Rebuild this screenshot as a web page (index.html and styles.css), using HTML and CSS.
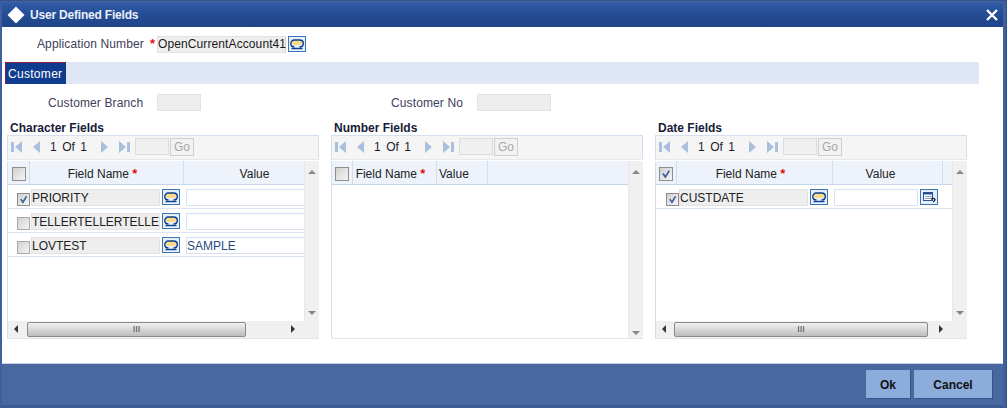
FILE: index.html
```html
<!DOCTYPE html>
<html lang="en">
<head>
<meta charset="utf-8">
<title>User Defined Fields</title>
<link rel="stylesheet" href="styles.css">
</head>
<body>
<svg class="defs" width="0" height="0" aria-hidden="true">
  <symbol id="lov" viewBox="0 0 18 16">
    <rect x=".5" y=".5" width="17" height="15" fill="#e6eff9" stroke="#3d75b4"/>
    <rect x="3" y="4" width="12" height="5" rx="2.500" fill="#f6dc8c"/>
    <path d="M6.500 11C4 11 2.800 9.800 2.800 7.600 2.800 5.300 4.400 4 6.500 4h5C13.800 4 15.300 5.300 15.300 7.500c0 2-1.300 3.500-3.800 3.500" fill="none" stroke="#0e3d8e" stroke-width="1.400"/>
    <path d="M3.500 12.500h11" stroke="#0e3d8e" stroke-width="1.400"/>
  </symbol>
  <symbol id="cal" viewBox="0 0 18 16">
    <rect x=".5" y=".5" width="17" height="15" fill="#e6eff9" stroke="#3d75b4"/>
    <rect x="3.500" y="3.500" width="9" height="8" fill="#fff" stroke="#27508f"/>
    <rect x="3" y="3" width="10" height="2.500" fill="#27508f"/>
    <path d="M5 7.500h7M5 9.500h7" stroke="#7d9cc6"/>
    <path d="M11.500 10.500c.5-1.500 3-1.500 3.500 0 .2 1-1 1.500-1.800 2.500" fill="none" stroke="#111" stroke-width="1.200"/>
  </symbol>
  <symbol id="first" viewBox="0 0 11 12"><path d="M0 1h3v10H0zM11 0v12L4 6z" fill="#a9c0dd"/></symbol>
  <symbol id="prev" viewBox="0 0 7 12"><path d="M7 0v12L0 6z" fill="#a9c0dd"/></symbol>
  <symbol id="next" viewBox="0 0 7 12"><path d="M0 0v12l7-6z" fill="#a9c0dd"/></symbol>
  <symbol id="last" viewBox="0 0 11 12"><path d="M8 1h3v10H8zM0 0v12l7-6z" fill="#a9c0dd"/></symbol>
  <symbol id="tick" viewBox="0 0 14 14"><path d="M3.500 6.500l2.800 4 4.500-7.500" fill="none" stroke="#3b5c9c" stroke-width="2"/></symbol>
</svg>

<div class="window">
  <header class="titlebar">
    <span class="diamond"></span>
    <h1 class="title">User Defined Fields</h1>
    <svg class="close" width="12" height="12" viewBox="0 0 12 12" aria-label="Close"><path d="M1 1l10 10M11 1L1 11" stroke="#fff" stroke-width="2.400"/></svg>
  </header>

  <main class="content">
    <div class="app-row">
      <label class="lbl lbl-app">Application Number</label>
      <span class="star">*</span>
      <span class="input ro app-input">OpenCurrentAccount41</span>
      <svg class="lov"><use href="#lov"/></svg>
    </div>

    <nav class="tabs"><span class="tab">Customer</span></nav>

    <div class="cust-row">
      <label class="lbl lbl-branch">Customer Branch</label>
      <span class="input ro cust-branch"></span>
      <label class="lbl lbl-no">Customer No</label>
      <span class="input ro cust-no"></span>
    </div>

    <div class="panels">
      <section class="panel">
        <h2 class="panel-title">Character Fields</h2>
        <div class="pager">
          <svg class="pg-first"><use href="#first"/></svg>
          <svg class="pg-prev"><use href="#prev"/></svg>
          <span class="pg-text">1&nbsp;&nbsp;Of&nbsp;&nbsp;1</span>
          <svg class="pg-next"><use href="#next"/></svg>
          <svg class="pg-last"><use href="#last"/></svg>
          <span class="pg-input"></span>
          <span class="pg-go">Go</span>
        </div>
        <div class="grid">
          <div class="grid-main">
            <div class="thead thead-char">
              <span class="th th-check"><span class="cb"></span></span>
              <span class="th th-name">Field Name&nbsp;<i class="star">*</i></span>
              <span class="th th-value">Value</span>
            </div>
            <div class="tr tr-char">
              <span class="cb"><svg><use href="#tick"/></svg></span>
              <span class="input ro field">PRIORITY</span>
              <svg class="lov"><use href="#lov"/></svg>
              <span class="input value value-wide"></span>
            </div>
            <div class="tr tr-char">
              <span class="cb cb-off"></span>
              <span class="input ro field">TELLERTELLERTELLE</span>
              <svg class="lov"><use href="#lov"/></svg>
              <span class="input value value-wide"></span>
            </div>
            <div class="tr tr-char">
              <span class="cb cb-off"></span>
              <span class="input ro field">LOVTEST</span>
              <svg class="lov"><use href="#lov"/></svg>
              <span class="input value value-wide sample">SAMPLE</span>
            </div>
          </div>
          <div class="vbar"><i class="arr-up"></i><i class="arr-down"></i></div>
          <div class="hbar">
            <i class="arr-left"></i>
            <div class="thumb thumb-char"><span class="grip">III</span></div>
            <i class="arr-right"></i>
          </div>
        </div>
      </section>

      <section class="panel">
        <h2 class="panel-title">Number Fields</h2>
        <div class="pager">
          <svg class="pg-first"><use href="#first"/></svg>
          <svg class="pg-prev"><use href="#prev"/></svg>
          <span class="pg-text">1&nbsp;&nbsp;Of&nbsp;&nbsp;1</span>
          <svg class="pg-next"><use href="#next"/></svg>
          <svg class="pg-last"><use href="#last"/></svg>
          <span class="pg-input"></span>
          <span class="pg-go">Go</span>
        </div>
        <div class="grid grid-nohbar">
          <div class="grid-main">
            <div class="thead thead-num">
              <span class="th th-check"><span class="cb"></span></span>
              <span class="th th-name">Field Name&nbsp;<i class="star">*</i></span>
              <span class="th">Value</span>
              <span class="th"></span>
            </div>
          </div>
          <div class="vbar"><i class="arr-up"></i><i class="arr-down"></i></div>
        </div>
      </section>

      <section class="panel">
        <h2 class="panel-title">Date Fields</h2>
        <div class="pager">
          <svg class="pg-first"><use href="#first"/></svg>
          <svg class="pg-prev"><use href="#prev"/></svg>
          <span class="pg-text">1&nbsp;&nbsp;Of&nbsp;&nbsp;1</span>
          <svg class="pg-next"><use href="#next"/></svg>
          <svg class="pg-last"><use href="#last"/></svg>
          <span class="pg-input"></span>
          <span class="pg-go">Go</span>
        </div>
        <div class="grid">
          <div class="grid-main">
            <div class="thead thead-date">
              <span class="th th-check"><span class="cb"><svg><use href="#tick"/></svg></span></span>
              <span class="th th-name">Field Name&nbsp;<i class="star">*</i></span>
              <span class="th th-datevalue">Value</span>
              <span class="th"></span>
            </div>
            <div class="tr tr-date">
              <span class="cb"><svg><use href="#tick"/></svg></span>
              <span class="input ro field">CUSTDATE</span>
              <svg class="lov"><use href="#lov"/></svg>
              <span class="input value value-date"></span>
              <svg class="lov lov-cal"><use href="#cal"/></svg>
            </div>
          </div>
          <div class="vbar"><i class="arr-up"></i><i class="arr-down"></i></div>
          <div class="hbar">
            <i class="arr-left"></i>
            <div class="thumb thumb-date"><span class="grip">III</span></div>
            <i class="arr-right"></i>
          </div>
        </div>
      </section>
    </div>
  </main>

  <footer class="footer">
    <button class="btn btn-ok" type="button">Ok</button>
    <button class="btn btn-cancel" type="button">Cancel</button>
  </footer>
</div>
</body>
</html>
```
FILE: styles.css
```css
* { box-sizing: border-box; }
html, body { margin: 0; padding: 0; }
body { width: 1007px; height: 408px; overflow: hidden; font: 12px "Liberation Sans", Arial, sans-serif; color: #333; background: #fff; }
.defs { position: absolute; }

.window { width: 1007px; height: 408px; display: flex; flex-direction: column; background: #3f5f9e; padding: 2px 3px 0 2px; border-top: 1px dotted #27457f; border-right: 1px dotted #27457f; }

.titlebar { height: 24px; flex: none; display: flex; align-items: center; padding: 0 5px 0 5px; background: linear-gradient(#2f5aa6, #234a92 60%, #1f4488); }
.diamond { width: 12px; height: 12px; margin: 0 0 0 3px; background: #fff; transform: rotate(45deg); }
.title { margin: 0 0 0 8px; font-size: 12px; font-weight: bold; color: #e8eef8; flex: 1; letter-spacing: -.2px; }
.close { flex: none; }

.content { flex: none; height: 336px; background: #fff; padding-left: 3px; }

.app-row { display: flex; align-items: center; height: 18px; margin-top: 8px; }
.lbl { color: #40405a; font-size: 12px; letter-spacing: .12px; line-height: 19px; }
.lbl-app { margin-left: 32px; width: 109px; white-space: nowrap; }
.star { color: #e01010; font-style: normal; font-weight: bold; font-size: 13px; line-height: 12px; }
.app-row .star { margin-left: 4px; }

.input { display: block; height: 17px; line-height: 15px; padding-left: 0; background: #fff; border: 1px solid #d6e0ee; color: #1a1a1a; font-size: 12px; white-space: nowrap; flex: none; }
.ro { background: #eeeeee; border-color: #e2e2e2; }
.app-input { width: 129px; margin-left: 2px; border-right-color: #cfcfcf; letter-spacing: .1px; }
.lov { width: 18px; height: 16px; margin-left: 2px; flex: none; display: block; }

.tabs { height: 22px; margin-top: 9px; width: 974px; margin-left: 0; background: #dfe6f5; }
.tab { display: inline-block; height: 22px; width: 61px; line-height: 22px; padding-left: 2px; background: #0f3c8e; border-top: 1px solid #8a1c3c; border-left: 1px solid #8a1c3c; color: #fff; font-size: 12px; letter-spacing: .3px; }

.cust-row { display: flex; align-items: center; height: 17px; margin-top: 10px; }
.cust-row .lbl { padding-top: 2px; }
.lbl-branch { margin-left: 43px; width: 109px; }
.cust-branch { width: 44px; }
.lbl-no { margin-left: 190px; width: 86px; }
.cust-no { width: 74px; }

.panels { display: flex; gap: 12px; margin-left: 2px; margin-top: 7px; }
.panel { width: 312px; }
.panel-title { margin: 0 0 0 3px; height: 17px; line-height: 20px; font-size: 12px; font-weight: bold; color: #16203a; }

.pager { height: 25px; display: flex; align-items: center; background: #f5f5f5; border: 1px solid #d5e0ee; border-bottom-color: #e8e8e8; padding: 0 0 2px 3px; }
.pager svg { flex: none; height: 12px; display: block; }
.pg-first { width: 11px; }
.pg-prev { width: 7px; margin-left: 11px; }
.pg-text { width: 61px; padding-left: 10px; font-size: 12px; color: #1c1c2c; white-space: nowrap; word-spacing: -.6px; }
.pg-next { width: 7px; }
.pg-last { width: 11px; margin-left: 11px; }
.pg-input { width: 34px; height: 17px; margin-left: 5px; background: #f0f0f0; border: 1px solid #dcdcdc; }
.pg-go { width: 24px; height: 18px; line-height: 16px; margin-left: 1px; text-align: center; border: 1px solid #cfcfcf; color: #a8a8a8; background: #f2f2f2; font-size: 12px; }

.grid { height: 178px; margin-top: 1px; display: grid; grid-template-columns: 296px 15px; grid-template-rows: 160px 17px; border-bottom: 1px solid #dfe6ef; border-right: 1px solid #dfe6ef; border-left: 1px solid #d5e0ee; background: #f0f0f0; }
.grid-nohbar { grid-template-rows: 177px; }
.grid-nohbar .grid-main { grid-row: 1; }
.grid-main { background: #fff; overflow: hidden; }

.thead { display: grid; height: 24px; background: #eef3fb; border-bottom: 1px solid #c6d5e8; color: #222; }
.thead-char { grid-template-columns: 22px 154px 1fr; }
.thead-num { grid-template-columns: 21px 84px 51px 1fr; }
.thead-date { grid-template-columns: 21px 156px 110px 1fr; }
.th { display: flex; align-items: center; justify-content: center; border-right: 1px solid #d2deee; font-size: 12px; white-space: nowrap; padding-top: 3px; }
.th:last-child { border-right: 0; }
.thead-num .th:nth-child(3) { justify-content: flex-start; padding-left: 2px; }
.th-check { padding-top: 2px; }
.th-name { padding-right: 8px; }
.th-value { padding-left: 21px; }
.th-datevalue { padding-right: 14px; }

.cb { display: block; width: 14px; height: 14px; border: 1px solid #8e8e8e; background: linear-gradient(135deg, #d0d0d0, #f5f5f5); flex: none; }
.cb svg { display: block; width: 12px; height: 12px; }
.cb-off { border-color: #a8a8a8; }

.tr { display: flex; align-items: center; height: 24px; border-bottom: 1px solid #dbe5f1; padding-left: 10px; padding-top: 1px; }
.tr .cb { margin-top: 5px; width: 13px; height: 13px; }
.tr .cb svg { width: 11px; height: 11px; }
.tr .field { width: 129px; color: #222; line-height: 16px; }
.tr .value { margin-left: 6px; line-height: 16px; }
.tr-char { padding-left: 9px; }
.tr-char .field { margin-left: 1px; }
.value-wide { width: 130px; }
.sample { color: #2a4b80; }
.value-date { width: 84px; }
.lov-cal { margin-left: 2px; }

.vbar { position: relative; background: #f0f0f0; border-left: 1px solid #e8e8e8; }
.hbar { grid-column: 1 / -1; display: flex; align-items: center; height: 17px; position: relative; background: #f0f0f0; }
.arr-up, .arr-down, .arr-left, .arr-right { position: absolute; width: 0; height: 0; border: 4px solid transparent; }
.arr-up { top: 9px; left: 3px; border-top: 0; border-bottom-color: #888; }
.arr-down { bottom: 6px; left: 3px; border-bottom: 0; border-top-color: #888; }
.grid-nohbar .arr-down { bottom: 3px; }
.arr-left { left: 6px; top: 4px; border-left: 0; border-right-color: #333; }
.arr-right { right: 24px; top: 4px; border-right: 0; border-left-color: #333; }
.thumb { height: 15px; margin-left: 19px; border: 1px solid #8a8a8a; border-radius: 2px; background: linear-gradient(#f0f0f0, #d8d8d8 50%, #bdbdbd); display: flex; align-items: center; justify-content: center; }
.thumb-char { width: 219px; }
.thumb-date { width: 254px; margin-left: 18px; }
.grip { color: #444; font-size: 9px; line-height: 9px; letter-spacing: 0; }

.footer { flex: 1; display: flex; justify-content: flex-end; align-items: flex-start; gap: 3px; padding: 6px 10px 0 0; background: #4a68a0; border-top: 1px solid #c7d2e6; border-bottom: 3px solid #3b5a93; margin-left: 0; }
.btn { height: 29px; margin-top: 0; padding: 1px 0 0; font: bold 12px "Liberation Sans", Arial, sans-serif; color: #111; background: #8cacdc; border: 0; border-right: 1px solid #34528c; border-bottom: 1px solid #34528c; }
.btn-ok { width: 45px; }
.btn-cancel { width: 79px; }
```
